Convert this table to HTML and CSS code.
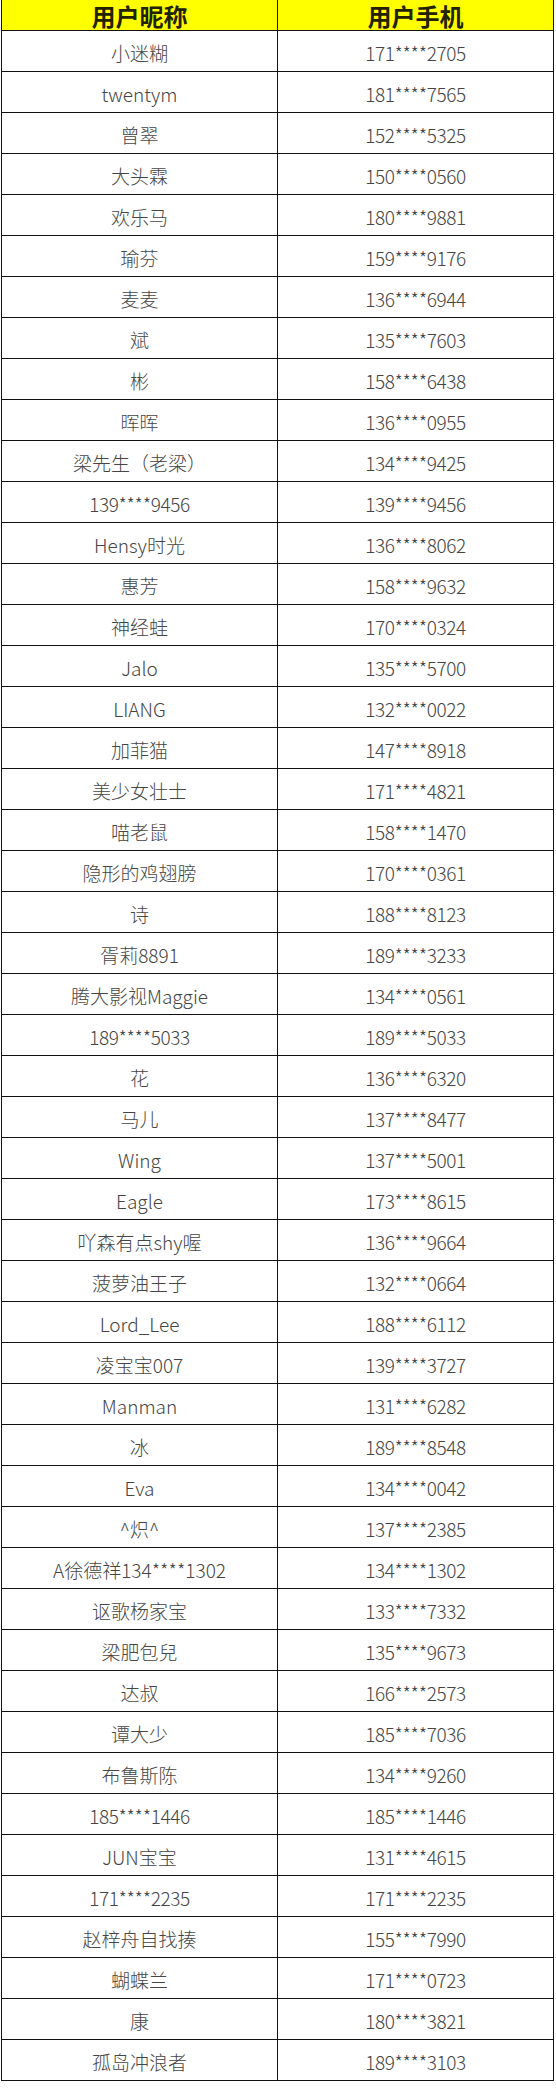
FILE: index.html
```html
<!DOCTYPE html>
<html lang="zh-CN">
<head>
<meta charset="utf-8">
<title>用户列表</title>
<link rel="stylesheet" href="styles.css">
</head>
<body>
<div class="sheet">
  <div class="cell head">用户昵称</div><div class="cell head">用户手机</div>
  <div class="cell">小迷糊</div><div class="cell num">171****2705</div>
  <div class="cell">twentym</div><div class="cell num">181****7565</div>
  <div class="cell">曾翠</div><div class="cell num">152****5325</div>
  <div class="cell">大头霖</div><div class="cell num">150****0560</div>
  <div class="cell">欢乐马</div><div class="cell num">180****9881</div>
  <div class="cell">瑜芬</div><div class="cell num">159****9176</div>
  <div class="cell">麦麦</div><div class="cell num">136****6944</div>
  <div class="cell">斌</div><div class="cell num">135****7603</div>
  <div class="cell">彬</div><div class="cell num">158****6438</div>
  <div class="cell">晖晖</div><div class="cell num">136****0955</div>
  <div class="cell">梁先生（老梁）</div><div class="cell num">134****9425</div>
  <div class="cell num">139****9456</div><div class="cell num">139****9456</div>
  <div class="cell">Hensy时光</div><div class="cell num">136****8062</div>
  <div class="cell">惠芳</div><div class="cell num">158****9632</div>
  <div class="cell">神经蛙</div><div class="cell num">170****0324</div>
  <div class="cell">Jalo</div><div class="cell num">135****5700</div>
  <div class="cell">LIANG</div><div class="cell num">132****0022</div>
  <div class="cell">加菲猫</div><div class="cell num">147****8918</div>
  <div class="cell">美少女壮士</div><div class="cell num">171****4821</div>
  <div class="cell">喵老鼠</div><div class="cell num">158****1470</div>
  <div class="cell">隐形的鸡翅膀</div><div class="cell num">170****0361</div>
  <div class="cell">诗</div><div class="cell num">188****8123</div>
  <div class="cell">胥莉8891</div><div class="cell num">189****3233</div>
  <div class="cell">腾大影视Maggie</div><div class="cell num">134****0561</div>
  <div class="cell num">189****5033</div><div class="cell num">189****5033</div>
  <div class="cell">花</div><div class="cell num">136****6320</div>
  <div class="cell">马儿</div><div class="cell num">137****8477</div>
  <div class="cell">Wing</div><div class="cell num">137****5001</div>
  <div class="cell">Eagle</div><div class="cell num">173****8615</div>
  <div class="cell">吖森有点shy喔</div><div class="cell num">136****9664</div>
  <div class="cell">菠萝油王子</div><div class="cell num">132****0664</div>
  <div class="cell">Lord_Lee</div><div class="cell num">188****6112</div>
  <div class="cell">凌宝宝007</div><div class="cell num">139****3727</div>
  <div class="cell">Manman</div><div class="cell num">131****6282</div>
  <div class="cell">冰</div><div class="cell num">189****8548</div>
  <div class="cell">Eva</div><div class="cell num">134****0042</div>
  <div class="cell">^炽^</div><div class="cell num">137****2385</div>
  <div class="cell">A徐德祥134****1302</div><div class="cell num">134****1302</div>
  <div class="cell">讴歌杨家宝</div><div class="cell num">133****7332</div>
  <div class="cell">梁肥包兒</div><div class="cell num">135****9673</div>
  <div class="cell">达叔</div><div class="cell num">166****2573</div>
  <div class="cell">谭大少</div><div class="cell num">185****7036</div>
  <div class="cell">布鲁斯陈</div><div class="cell num">134****9260</div>
  <div class="cell num">185****1446</div><div class="cell num">185****1446</div>
  <div class="cell">JUN宝宝</div><div class="cell num">131****4615</div>
  <div class="cell num">171****2235</div><div class="cell num">171****2235</div>
  <div class="cell">赵梓舟自找揍</div><div class="cell num">155****7990</div>
  <div class="cell">蝴蝶兰</div><div class="cell num">171****0723</div>
  <div class="cell">康</div><div class="cell num">180****3821</div>
  <div class="cell">孤岛冲浪者</div><div class="cell num">189****3103</div>
</div>
</body>
</html>
```

FILE: styles.css
```css
html, body {
  margin: 0;
  padding: 0;
  background: #ffffff;
}

.sheet {
  margin-left: 1px;
  width: 553px;
  display: grid;
  grid-template-columns: 276px 276px;
  border-left: 1px solid #111111;
  font-family: "Noto Sans CJK SC", "Noto Sans", sans-serif;
}

.cell {
  box-sizing: border-box;
  height: 41px;
  border-right: 1px solid #111111;
  border-bottom: 1px solid #111111;
  display: flex;
  align-items: center;
  justify-content: center;
  padding-top: 2px;
  font-size: 19px;
  font-weight: 300;
  color: #454545;
  white-space: nowrap;
}

.num {
  letter-spacing: -0.4px;
}

.head {
  height: 31px;
  padding-top: 0;
  background: #ffff00;
  font-size: 24px;
  font-weight: bold;
  color: #222200;
}
```
